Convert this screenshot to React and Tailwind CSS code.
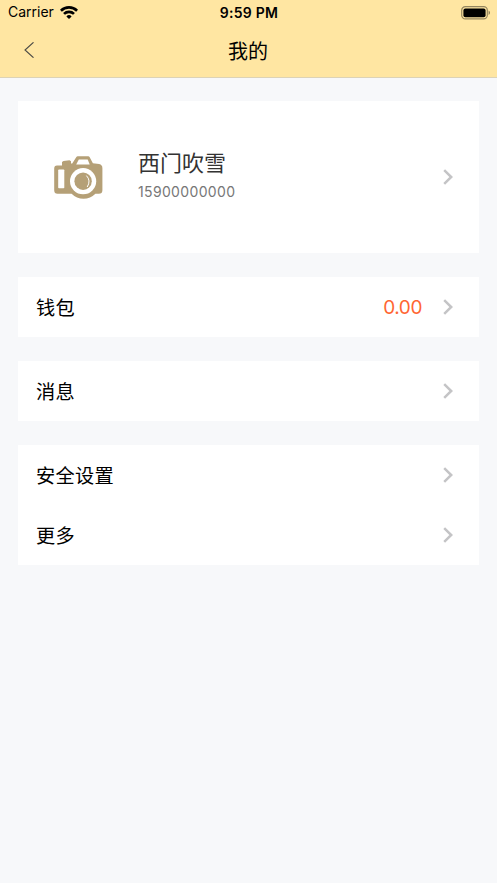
import React from 'react';

const groups = [
  [{ label: '钱包', value: '0.00' }],
  [{ label: '消息' }],
  [{ label: '安全设置' }, { label: '更多' }],
];

const Chevron = () => (
  <svg className="w-[10px] h-4 shrink-0" viewBox="0 0 10 16" fill="none" stroke="#c4c4c6" strokeWidth="2.5">
    <path d="M1.2 1.2 8.2 8 1.2 14.8" />
  </svg>
);

const WifiIcon = () => (
  <svg className="w-[18px] h-[13px] -mt-[2px]" viewBox="0 0 18 13" fill="none" stroke="#000" strokeWidth="2.7">
    <path d="M.9 4.7a11.6 11.6 0 0 1 16.2 0" />
    <path d="M4 7.9a7.2 7.2 0 0 1 10 0" />
    <path d="M9 13 6.4 10.4a3.7 3.7 0 0 1 5.2 0Z" fill="#000" stroke="none" />
  </svg>
);

const BatteryIcon = () => (
  <svg className="w-[30px] h-[14px] -mt-px" viewBox="0 0 30 14">
    <rect x=".7" y=".7" width="25.6" height="12.2" rx="3.6" fill="none" stroke="#000" strokeOpacity=".42" strokeWidth="1.2" />
    <rect x="2.4" y="2.4" width="22.2" height="8.8" rx="2" />
    <path d="M27.6 4.6c1.8.7 1.8 3.7 0 4.4Z" fillOpacity=".5" />
  </svg>
);

const CameraIcon = () => (
  <svg className="w-[49px] h-[43px] shrink-0" viewBox="0 0 49 43">
    <path
      fill="#b5a077"
      d="M3 9.5h5V6L9.5 5l6-.8 1.500 1v2.400h1.200L22.200 1.200Q22.800.3 23.800.3h10.400q1 0 1.500.9l3.200 6 6.200.9q3.300.7 3.300 4.200v21.900q0 3.500-3.600 3.500h-3.400A16.600 16.600 0 0 1 17.600 37.700H3.500Q.2 37.700.2 34.200V12.400q0-2.900 2.800-2.900Z"
    />
    <rect x="4.2" y="13.5" width="6.1" height="18.7" rx=".8" fill="#fff" />
    <path d="M24.8 3.6h8.9l2 4.8H22.2Z" fill="#fff" />
    <circle cx="29.1" cy="25.2" r="13.1" fill="#fff" />
    <circle cx="29.1" cy="25.2" r="8.7" fill="#b5a077" />
    <path d="M32.4 19.6Q37.200 24.600 33.200 31" fill="none" stroke="#fff" strokeWidth="1" />
  </svg>
);

const App = () => {
  return (
    <div className="min-h-screen bg-[#f7f8fa] font-['Inter','Noto_Sans_CJK_SC',sans-serif] text-black">
      <header className="h-[78px] bg-[#ffe6a2] border-b border-[#ddd3b6]">
        <div className="grid grid-cols-3 items-center h-[26px] pl-2 pr-[6px]">
          <div className="flex items-center gap-[6px]">
            <span className="text-[14px] leading-5 -mt-[2px]">Carrier</span>
            <WifiIcon />
          </div>
          <span className="text-center text-[14px] leading-5 font-semibold tracking-[0.25px] -mt-px -ml-px">9:59 PM</span>
          <div className="flex justify-end">
            <BatteryIcon />
          </div>
        </div>
        <div className="grid grid-cols-3 items-center h-12 px-6">
          <svg className="w-[10px] h-4" viewBox="0 0 10 16" fill="none" stroke="#4a4a45" strokeWidth="1.1">
            <path d="M9.5.3 1 8l8.5 7.7" />
          </svg>
          <h1 className="text-center text-[20px] leading-[28px] pt-1 -ml-px">我的</h1>
        </div>
      </header>

      <main className="flex flex-col gap-6 px-[18px] pt-[23px]">
        <section className="flex items-center h-[152px] bg-white pl-9 pr-[26px]">
          <CameraIcon />
          <div className="flex-1 ml-[35px] pb-[5px]">
            <p className="text-[22px] leading-[30px] text-[#333]">西门吹雪</p>
            <p className="text-[14px] leading-5 tracking-[0.35px] mt-1 text-[#777]">15900000000</p>
          </div>
          <Chevron />
        </section>

        {groups.map((rows, idx) => (
          <section key={idx} className="bg-white">
            {rows.map((row) => (
              <div key={row.label} className="flex items-center h-[60px] pl-[18px] pr-[26px]">
                <span className="flex-1 pt-[2px] text-[19.2px] tracking-[0.3px]">{row.label}</span>
                {row.value && (
                  <span className="mr-[21px] pt-[2px] text-[19px] tracking-[-0.4px] text-[#ff6633]">{row.value}</span>
                )}
                <Chevron />
              </div>
            ))}
          </section>
        ))}
      </main>
    </div>
  );
};

export default App;
